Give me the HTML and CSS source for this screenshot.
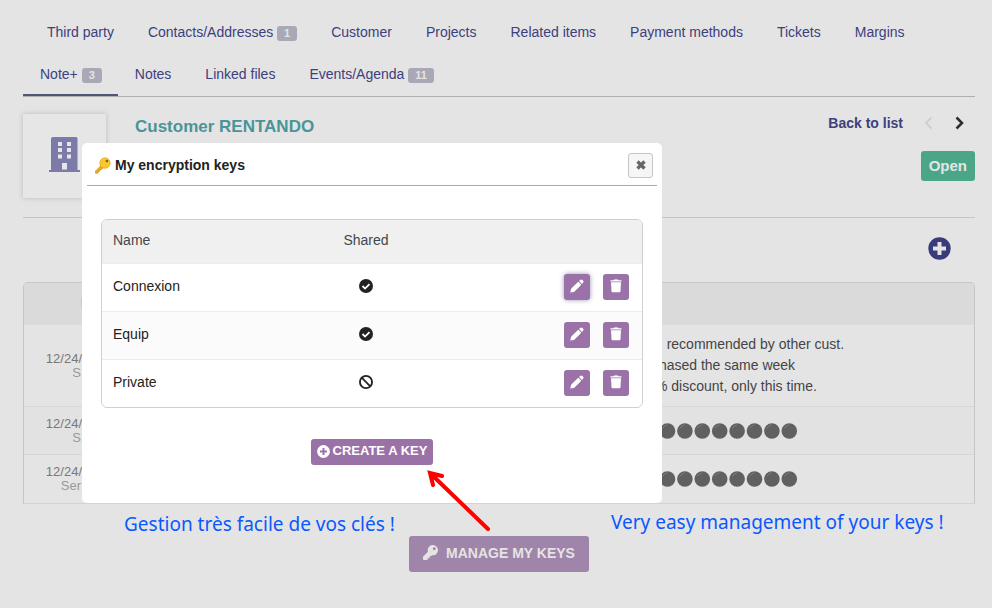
FILE: index.html
```html
<!DOCTYPE html>
<html lang="en">
<head>
<meta charset="utf-8">
<title>My encryption keys</title>
<link rel="stylesheet" href="styles.css">
</head>
<body>
<svg class="defs" width="0" height="0" aria-hidden="true">
  <symbol id="pencil" viewBox="0 0 14 14"><path d="M8.300 2.700l3 3L4.800 12.200q-.5.500-1.200.7L.6 13.600q-.4 0-.3-.5L1 10.200q.2-.7.700-1.200zM9 2L10.200.9q1.200-1 2.400.2l.3.300q1.200 1.200.2 2.400L12 5z"/></symbol>
  <symbol id="trash" viewBox="0 0 12 14"><path d="M4 .5h4l.6.700H11.500V2.500H.5V1.200H3.400zM1 3.300h10L10.500 12.200Q10.400 13.300 9.300 13.300H2.700Q1.600 13.300 1.500 12.200z"/></symbol>
  <symbol id="check" viewBox="0 0 512 512"><circle cx="256" cy="256" r="256"/><path d="M128 256l92 92 164-164" fill="none" stroke="#fff" stroke-width="66"/></symbol>
  <symbol id="ban" viewBox="0 0 512 512"><circle cx="256" cy="256" r="222" fill="none" stroke="currentColor" stroke-width="68"/><path d="M100 100l312 312" stroke="currentColor" stroke-width="64"/></symbol>
  <symbol id="dots" viewBox="0 0 140 18">
    <g id="dot"><circle cx="8.500" cy="9" r="7.800"/><path d="M3.500 6.500Q5 3.500 8.500 2.800" fill="none" stroke="#7c7c7c" stroke-width="1"/></g>
    <use href="#dot" x="17.400"/><use href="#dot" x="34.800"/><use href="#dot" x="52.200"/><use href="#dot" x="69.600"/><use href="#dot" x="87"/><use href="#dot" x="104.400"/><use href="#dot" x="121.800"/>
  </symbol>
</svg>

<main class="page">
  <nav class="tabs">
    <div class="tab-row tab-row-first">
      <a href="#">Third party</a>
      <a href="#">Contacts/Addresses <span class="badge">1</span></a>
      <a href="#">Customer</a>
      <a href="#">Projects</a>
      <a href="#">Related items</a>
      <a href="#">Payment methods</a>
      <a href="#">Tickets</a>
      <a href="#">Margins</a>
    </div>
    <div class="tab-row">
      <a href="#" class="active">Note+ <span class="badge">3</span></a>
      <a href="#">Notes</a>
      <a href="#">Linked files</a>
      <a href="#">Events/Agenda <span class="badge">11</span></a>
    </div>
  </nav>

  <header class="banner">
    <div class="thumb">
      <svg width="31" height="36" viewBox="0 0 31 36" fill="#7c7aa8" aria-hidden="true"><path fill-rule="evenodd" d="M4 0h23q1.500 0 1.500 1.500V33H31v2H0v-2h2V1.500Q2 0 4 0zM9 5v4h4V5zM18 5v4h4V5zM9 11v4h4v-4zM18 11v4h4v-4zM9 17.500v4h4v-4zM18 17.500v4h4v-4zM13 26v6.500h5V26z"/></svg>
    </div>
    <h1>Customer RENTANDO</h1>
    <div class="banner-side">
      <div class="pager">
        <a href="#">Back to list</a>
        <svg class="prev" width="9" height="14" viewBox="0 0 9 14" aria-hidden="true"><path d="M7.500 1.500L2 7l5.500 5.500"/></svg>
        <svg class="next" width="9" height="14" viewBox="0 0 9 14" aria-hidden="true"><path d="M1.500 1.500L7 7l-5.500 5.500"/></svg>
      </div>
      <span class="status">Open</span>
    </div>
  </header>

  <div class="toolbar">
    <button type="button" class="add" aria-label="Add">
      <svg width="23" height="23" viewBox="0 0 23 23" aria-hidden="true"><circle cx="11.500" cy="11.500" r="11.200" fill="#383c78"/><path d="M11.500 5v13M5 11.500h13" stroke="#e4e4e4" stroke-width="4"/></svg>
    </button>
  </div>

  <div class="notes">
    <table>
      <thead>
        <tr><th class="when"><i class="mark"></i></th><th class="gap"></th><th></th></tr>
      </thead>
      <tbody>
        <tr><td class="when">12/24/<small>S</small></td><td></td><td class="text">&nbsp;&nbsp;&nbsp;recommended by other cust.<br>&nbsp;hased the same week<br>% discount, only this time.</td></tr>
        <tr><td class="when">12/24/<small>S</small></td><td></td><td><svg class="dots" width="140" height="18"><use href="#dots"/></svg></td></tr>
        <tr><td class="when">12/24/<small>Ser</small></td><td></td><td><svg class="dots" width="140" height="18"><use href="#dots"/></svg></td></tr>
      </tbody>
    </table>
  </div>

  <div class="actions">
    <button type="button" class="manage">
      <svg width="15" height="15" viewBox="0 0 512 512" fill="currentColor" aria-hidden="true"><path fill-rule="evenodd" d="M512 176a176 176 0 0 1-209 173l-24 27c-5 5-11 8-18 8h-37v40c0 13-11 24-24 24h-40v40c0 13-11 24-24 24H24c-13 0-24-11-24-24v-78c0-6 3-12 7-17l162-162A176 176 0 1 1 512 176zM336 128a48 48 0 1 0 96 0a48 48 0 1 0-96 0z"/></svg>
      MANAGE MY KEYS
    </button>
  </div>
</main>

<section class="dialog" role="dialog" aria-labelledby="dialog-title">
  <header class="dialog-head">
    <svg width="17" height="17" viewBox="0 0 17 17" aria-hidden="true"><path d="M7.500 8L1.500 14v2.200h2.600v-1.700h1.600v-1.700h1.600L10 10z" fill="#f0ac1c" stroke="#b97d10" stroke-width=".5"/><circle cx="11" cy="6" r="5.200" fill="#fbc82c" stroke="#d99a18" stroke-width=".6"/><circle cx="12.900" cy="4.100" r="1.400" fill="#80621a"/></svg>
    <h2 id="dialog-title">My encryption keys</h2>
    <button type="button" class="close" aria-label="Close"><svg width="10" height="10" viewBox="0 0 10 10" aria-hidden="true"><path d="M1.500 1.500l7 7M8.500 1.500l-7 7" stroke="#666" stroke-width="3.200"/></svg></button>
  </header>
  <div class="keys">
    <table>
      <thead><tr><th>Name</th><th class="shared">Shared</th><th></th></tr></thead>
      <tbody>
        <tr><td>Connexion</td><td class="shared"><svg width="14" height="14"><use href="#check"/></svg></td><td class="tools"><button type="button" class="tool focus" aria-label="Edit"><svg width="14" height="14"><use href="#pencil"/></svg></button><button type="button" class="tool" aria-label="Delete"><svg width="12" height="14"><use href="#trash"/></svg></button></td></tr>
        <tr><td>Equip</td><td class="shared"><svg width="14" height="14"><use href="#check"/></svg></td><td class="tools"><button type="button" class="tool" aria-label="Edit"><svg width="14" height="14"><use href="#pencil"/></svg></button><button type="button" class="tool" aria-label="Delete"><svg width="12" height="14"><use href="#trash"/></svg></button></td></tr>
        <tr><td>Private</td><td class="shared"><svg width="14" height="14"><use href="#ban"/></svg></td><td class="tools"><button type="button" class="tool" aria-label="Edit"><svg width="14" height="14"><use href="#pencil"/></svg></button><button type="button" class="tool" aria-label="Delete"><svg width="12" height="14"><use href="#trash"/></svg></button></td></tr>
      </tbody>
    </table>
  </div>
  <button type="button" class="create">
    <svg width="13" height="13" viewBox="0 0 13 13" aria-hidden="true"><circle cx="6.500" cy="6.500" r="6.400" fill="#fff"/><path d="M6.500 3v7M3 6.500h7" stroke="#9b72a8" stroke-width="2"/></svg>
    CREATE A KEY
  </button>
</section>

<p class="caption caption-fr" lang="fr">Gestion très facile de vos clés !</p>
<p class="caption caption-en">Very easy management of your keys !</p>
<svg class="arrow" width="66" height="64" viewBox="0 0 66 64" aria-hidden="true"><path d="M61 59L4 4M15 6L3 3l3 12" fill="none" stroke="#f00" stroke-width="4" stroke-linecap="round" stroke-linejoin="miter"/></svg>
</body>
</html>
```
FILE: styles.css
```css
* { box-sizing: border-box; }

body {
  margin: 0;
  background: #e4e4e4;
  color: #444;
  font: 14px/20px "Liberation Sans", Arial, sans-serif;
}

a { color: #3c407c; text-decoration: none; }
h1, h2, p { margin: 0; }
svg { flex: none; }
button { font: inherit; border: 0; padding: 0; cursor: pointer; }
table { width: 100%; border-collapse: collapse; table-layout: fixed; }
th { font-weight: normal; text-align: left; }
.defs { position: absolute; }

.page { padding: 11px 17px 0 23px; }

/* Tabs */
.tabs { border-bottom: 1px solid #b0b0b2; }
.tab-row { display: flex; }
.tab-row-first { padding-left: 7px; }
.tab-row a { padding: 0 17px; line-height: 42px; white-space: nowrap; }
.tab-row .active {
  height: 43px;
  padding-right: 16px;
  box-shadow: inset 0 -2px #4c5874;
}
.badge {
  display: inline-block;
  min-width: 20px;
  padding: 0 7px;
  border-radius: 3px;
  background: #a9a8b6;
  color: #e4e4e4;
  font-size: 11px;
  font-weight: bold;
  line-height: 15px;
  text-align: center;
}

/* Banner */
.banner {
  display: flex;
  padding: 17px 0 19px;
  border-bottom: 1px solid #c4c4c4;
}
.thumb {
  display: flex;
  align-items: center;
  justify-content: center;
  width: 83px;
  height: 84px;
  margin-right: 29px;
  padding-bottom: 2px;
  background: #e6e6e6;
  box-shadow: 0 0 5px #bbb;
}
h1 { color: #4a9498; font-size: 17px; line-height: 26px; }
.banner-side {
  display: flex;
  flex-direction: column;
  align-items: flex-end;
  gap: 19px;
  margin-left: auto;
}
.pager {
  display: flex;
  align-items: center;
  padding-right: 11px;
  font-weight: bold;
  line-height: 18px;
}
.pager svg { fill: none; stroke: #2c2c2c; stroke-width: 2.5; }
.pager .prev { margin: 0 22px 0 21px; stroke: #cfcfcf; stroke-width: 2; }
.status {
  padding: 0 8px;
  border-radius: 3px;
  background: #4ba688;
  color: #e4e4e4;
  font-size: 15px;
  font-weight: bold;
  line-height: 30px;
}

.toolbar {
  display: flex;
  align-items: center;
  justify-content: flex-end;
  height: 64px;
  padding: 0 24px 4px 0;
}
.add { display: flex; background: none; }

/* Notes */
.notes {
  border: 1px solid #c6c6c6;
  border-bottom-color: #d4d4d4;
  border-radius: 5px 5px 0 0;
  overflow: hidden;
}
.notes th { height: 42px; background: #dadada; }
.notes td, .notes th { padding: 0; }
.notes td { height: 48px; border-top: 1px solid #d6d6d6; }
.notes tbody tr:first-child td { border-top: 0; }
.notes tr:nth-child(even) td { background: #e2e2e2; }
.notes .when {
  width: 58px;
  color: #777;
  font-size: 13px;
  line-height: 14px;
  text-align: right;
}
.when small { display: block; padding-right: 1px; color: #999; font-size: 13px; }
.gap { width: 573px; }
.mark { display: inline-block; width: 1px; height: 10px; background: #e3c9a2; }
.notes .text { padding: 9px 0; line-height: 21px; }
.dots { display: block; margin-left: 4px; fill: #606060; }

.actions { display: flex; justify-content: center; padding: 32px 0; }
.manage {
  display: flex;
  align-items: center;
  gap: 8px;
  height: 36px;
  padding: 0 14px 2px;
  border-radius: 3px;
  background: #a085aa;
  color: #e4e4e4;
  font-weight: bold;
}

/* Dialog */
.dialog {
  position: absolute;
  top: 143px;
  left: 82px;
  width: 580px;
  padding: 5px 5px 38px;
  border-radius: 5px;
  background: #fff;
  color: #222;
}
.dialog-head {
  display: flex;
  align-items: center;
  gap: 4px;
  height: 38px;
  padding: 0 4px 3px 7px;
  border-bottom: 1px solid #aaa;
}
h2 { flex: 1; font-size: 14px; line-height: 20px; }
.close {
  display: flex;
  align-items: center;
  justify-content: center;
  width: 25px;
  height: 25px;
  border: 1px solid #c5c5c5;
  border-radius: 3px;
  background: #f6f6f6;
}
.keys {
  margin: 33px 14px 0;
  border: 1px solid #d0d0d0;
  border-radius: 6px;
  overflow: hidden;
}
.keys th, .keys td { padding: 0 11px 2px; }
.keys th { height: 43px; background: #f0f0f0; color: #44464f; }
.keys td { height: 48px; border-top: 1px solid #ececec; }
.keys tr:nth-child(even) td { background: #fbfbfb; }
.keys .shared { width: 150px; text-align: center; }
.keys th:first-child { width: 189px; }
.shared svg { display: block; margin: auto; fill: currentColor; }
.keys .tools { padding: 0 13px; text-align: right; }
.tool {
  display: inline-flex;
  align-items: center;
  justify-content: center;
  width: 26px;
  height: 26px;
  margin-left: 13px;
  padding-bottom: 2px;
  border-radius: 3px;
  background: #9b72a8;
  color: #fff;
  vertical-align: middle;
}
.tool svg { fill: currentColor; }
.focus { box-shadow: 0 0 5px #9a94b4; }
.create {
  display: flex;
  align-items: center;
  gap: 3px;
  height: 26px;
  margin: 31px auto 0;
  padding: 0 6px 2px;
  border-radius: 3px;
  background: #9b72a8;
  color: #fff;
  font-size: 13px;
  font-weight: bold;
}

/* Annotations */
.caption {
  position: absolute;
  color: #0a58ff;
  font: 19px/26px "Noto Sans", "Open Sans", sans-serif;
  white-space: nowrap;
}
.caption-fr { top: 511px; left: 124px; }
.caption-en { top: 509px; left: 611px; }
.arrow { position: absolute; top: 470px; left: 427px; }
```
